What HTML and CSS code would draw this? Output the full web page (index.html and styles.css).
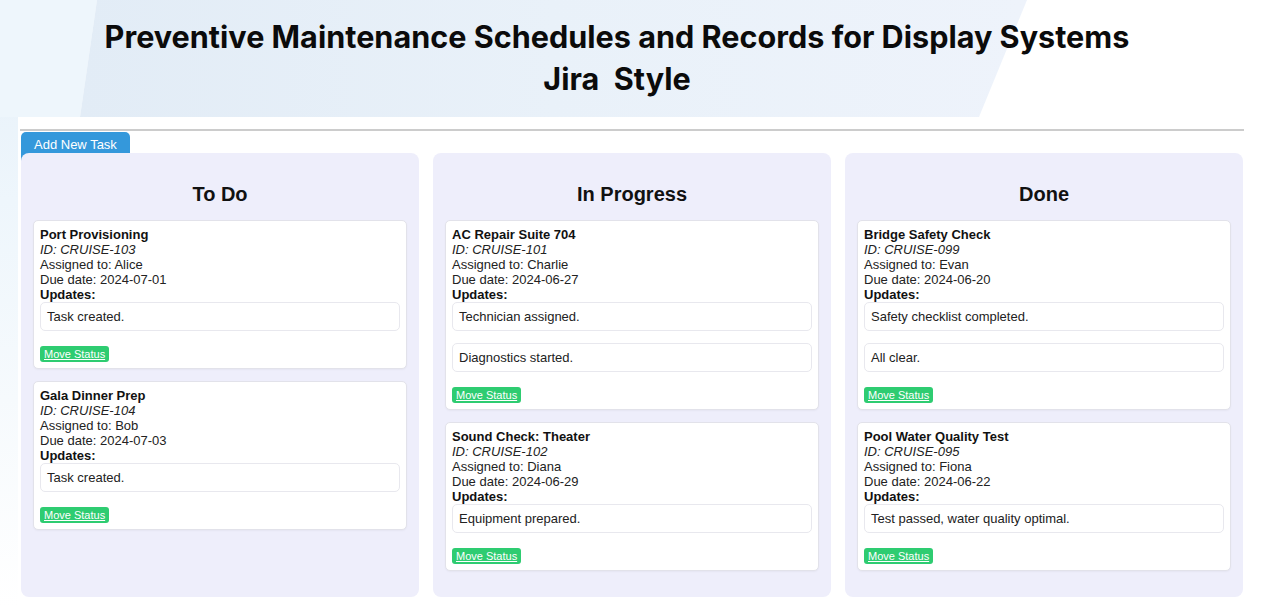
FILE: index.html
```html
<!DOCTYPE html>
<html lang="en">
<head>
<meta charset="utf-8">
<title>Preventive Maintenance Schedules and Records for Display Systems</title>
<link rel="stylesheet" href="styles.css">
</head>
<body>
<div class="page">
  <header class="banner">
    <svg class="banner-bg" viewBox="0 0 1262 117" preserveAspectRatio="none" aria-hidden="true">
      <defs>
        <linearGradient id="mid" x1="0" y1="0" x2="1" y2="0">
          <stop offset="0" stop-color="#e2ecf6"/>
          <stop offset="0.5" stop-color="#e9f1f9"/>
          <stop offset="1" stop-color="#eef3fb"/>
        </linearGradient>
      </defs>
      <rect x="0" y="0" width="1262" height="117" fill="#ffffff"/>
      <polygon points="0,0 97,0 80,117 0,117" fill="#eef6fc"/>
      <polygon points="97,0 1027,0 979,117 80,117" fill="url(#mid)"/>
    </svg>
    <h1 class="title">Preventive Maintenance Schedules and Records for Display Systems<br>Jira&nbsp; Style</h1>
  </header>

  <main class="main">
    <hr class="rule">
    <button class="add-btn" type="button">Add New Task</button>
    <div class="board">
      <section class="column">
        <h2 class="column-title">To Do</h2>
        <article class="card">
          <div class="card-title">Port Provisioning</div>
          <div class="card-id">ID: CRUISE-103</div>
          <div>Assigned to: Alice</div>
          <div>Due date: 2024-07-01</div>
          <div class="updates-label">Updates:</div>
          <div class="update">Task created.</div>
          <div class="actions"><button class="move-btn" type="button">Move Status</button></div>
        </article>
        <article class="card">
          <div class="card-title">Gala Dinner Prep</div>
          <div class="card-id">ID: CRUISE-104</div>
          <div>Assigned to: Bob</div>
          <div>Due date: 2024-07-03</div>
          <div class="updates-label">Updates:</div>
          <div class="update">Task created.</div>
          <div class="actions"><button class="move-btn" type="button">Move Status</button></div>
        </article>
      </section>

      <section class="column">
        <h2 class="column-title">In Progress</h2>
        <article class="card">
          <div class="card-title">AC Repair Suite 704</div>
          <div class="card-id">ID: CRUISE-101</div>
          <div>Assigned to: Charlie</div>
          <div>Due date: 2024-06-27</div>
          <div class="updates-label">Updates:</div>
          <div class="update">Technician assigned.</div>
          <div class="update">Diagnostics started.</div>
          <div class="actions"><button class="move-btn" type="button">Move Status</button></div>
        </article>
        <article class="card">
          <div class="card-title">Sound Check: Theater</div>
          <div class="card-id">ID: CRUISE-102</div>
          <div>Assigned to: Diana</div>
          <div>Due date: 2024-06-29</div>
          <div class="updates-label">Updates:</div>
          <div class="update">Equipment prepared.</div>
          <div class="actions"><button class="move-btn" type="button">Move Status</button></div>
        </article>
      </section>

      <section class="column">
        <h2 class="column-title">Done</h2>
        <article class="card">
          <div class="card-title">Bridge Safety Check</div>
          <div class="card-id">ID: CRUISE-099</div>
          <div>Assigned to: Evan</div>
          <div>Due date: 2024-06-20</div>
          <div class="updates-label">Updates:</div>
          <div class="update">Safety checklist completed.</div>
          <div class="update">All clear.</div>
          <div class="actions"><button class="move-btn" type="button">Move Status</button></div>
        </article>
        <article class="card">
          <div class="card-title">Pool Water Quality Test</div>
          <div class="card-id">ID: CRUISE-095</div>
          <div>Assigned to: Fiona</div>
          <div>Due date: 2024-06-22</div>
          <div class="updates-label">Updates:</div>
          <div class="update">Test passed, water quality optimal.</div>
          <div class="actions"><button class="move-btn" type="button">Move Status</button></div>
        </article>
      </section>
    </div>
  </main>
</div>
</body>
</html>
```

FILE: styles.css
```css
* {
  box-sizing: border-box;
}

html, body {
  margin: 0;
  padding: 0;
}

body {
  font-family: "Liberation Sans", Arial, sans-serif;
  color: #222;
  background: linear-gradient(to bottom, #e6f0f9 0px, #eef6fc 200px, #f6fafd 400px, #ffffff 607px);
  min-height: 100vh;
}

.page {
  display: flex;
  flex-direction: column;
  min-height: 100vh;
}

.banner {
  display: grid;
  height: 117px;
  overflow: hidden;
}

.banner-bg {
  grid-area: 1 / 1;
  width: 1262px;
  height: 117px;
  display: block;
}

.title {
  grid-area: 1 / 1;
  margin: 0;
  padding: 16px 28px 0 0;
  text-align: center;
  font-family: Inter, "Open Sans", sans-serif;
  font-weight: 700;
  font-size: 30.6px;
  line-height: 42px;
  color: #0b0b0b;
}

.main {
  flex: 1;
  margin-left: 18px;
  padding: 0 19px 10px 3px;
  background: #ffffff;
}

.rule {
  height: 0;
  margin: 12px -1px 0;
  border: 0;
  border-top: 2px solid #cccccc;
}

.add-btn {
  display: block;
  margin: 1px 0 -9px 0;
  padding: 5px 13px 10px;
  border: 0;
  border-radius: 5px 5px 0 0;
  background: #3498db;
  color: #ffffff;
  font-family: "Liberation Sans", Arial, sans-serif;
  font-size: 13px;
  line-height: 15px;
}

.board {
  position: relative;
  display: grid;
  grid-template-columns: repeat(3, 1fr);
  gap: 14px;
}

.column {
  background: #eeeefb;
  border-radius: 8px;
  padding: 12px;
  min-height: 444px;
}

.column-title {
  margin: 18px 0 14px;
  text-align: center;
  font-size: 20px;
  line-height: 23px;
  font-weight: 700;
  color: #111;
}

.card {
  background: #ffffff;
  border: 1px solid #e2e2ea;
  border-radius: 5px;
  padding: 6px;
  margin-bottom: 12px;
  font-size: 13px;
  line-height: 15px;
  box-shadow: 0 1px 2px rgba(0, 0, 0, 0.04);
}

.card-title {
  font-weight: 700;
  color: #111;
}

.card-id {
  font-style: italic;
}

.updates-label {
  font-weight: 700;
  color: #111;
}

.update {
  margin-bottom: 12px;
  padding: 6px;
  border: 1px solid #e8e8ee;
  border-radius: 5px;
  background: #ffffff;
}

.actions {
  display: flex;
  padding-top: 3px;
}

.move-btn {
  padding: 1px 4px;
  border: 0;
  border-radius: 3px;
  background: #2ecc71;
  color: #ffffff;
  font-family: "Liberation Sans", Arial, sans-serif;
  font-size: 11px;
  line-height: 14px;
  text-decoration: underline;
}
```
